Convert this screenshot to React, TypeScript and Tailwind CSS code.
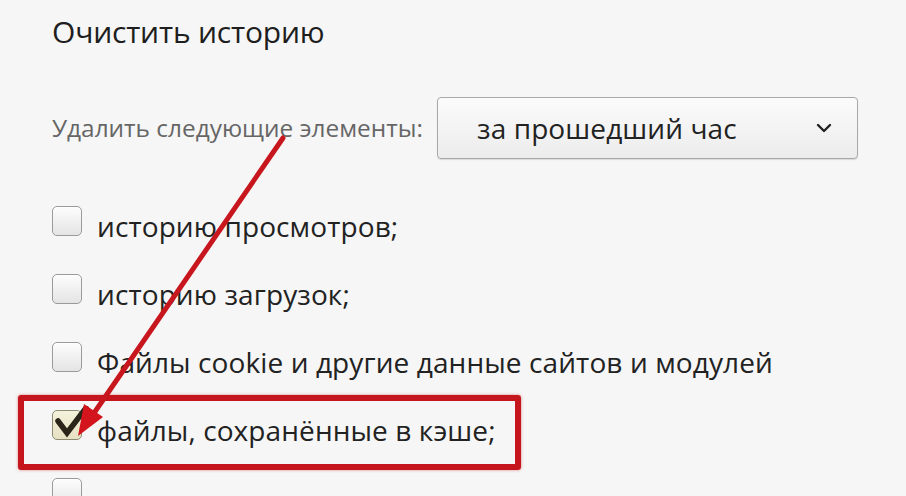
import React from "react";

const font = { fontFamily: '"Open Sans", "Noto Sans", sans-serif' };

function Box({ checked }: { checked?: boolean }) {
  return (
    <div className="relative shrink-0">
      <div
        className={
          checked
            ? "w-[30px] h-[30px] rounded-[5px] border border-[#8e8b74] bg-gradient-to-b from-[#f4f1dc] to-[#e6e1c2]"
            : "w-[30px] h-[30px] rounded-[5px] border border-[#9a9a9a] bg-gradient-to-b from-[#fdfdfd] to-[#e4e4e4] shadow-[inset_0_1px_1px_rgba(255,255,255,0.9)]"
        }
      />
      {checked && (
        <svg
          className="absolute left-[2px] top-[-4px]"
          width="36"
          height="32"
          viewBox="0 0 36 32"
        >
          <path
            d="M4 15 L13 27 L32 2"
            fill="none"
            stroke="#2b2418"
            strokeWidth="5.5"
            strokeLinecap="round"
            strokeLinejoin="miter"
          />
        </svg>
      )}
    </div>
  );
}

function Row({ label, checked }: { label: string; checked?: boolean }) {
  return (
    <div className="flex items-center h-[30px] gap-[15px]">
      <Box checked={checked} />
      <span className="pt-[10px] text-[28px] text-[#222] tracking-[0.1px] whitespace-nowrap leading-none">
        {label}
      </span>
    </div>
  );
}

export default function App() {
  return (
    <div
      className="relative w-[906px] h-[496px] overflow-hidden bg-[#f6f6f6]"
      style={font}
    >
      <div className="pl-[52px] pt-[12px]">
        <h1 className="text-[30px] font-normal text-[#1e1e1e] leading-[40px] tracking-[-0.2px]">
          Очистить историю
        </h1>
        <div className="flex items-center mt-[45px]">
          <span className="text-[24.4px] text-[#666] w-[385px] whitespace-nowrap">
            Удалить следующие элементы:
          </span>
          <div className="flex items-center justify-between w-[421px] h-[62px] pl-[39px] pr-[25px] border border-[#a8a8a8] rounded-[4px] bg-gradient-to-b from-[#fbfbfb] to-[#ececec] shadow-[0_1px_1px_rgba(0,0,0,0.12)]">
            <span className="text-[28px] text-[#222] tracking-[0.1px]">
              за прошедший час
            </span>
            <svg width="16" height="10" viewBox="0 0 16 10">
              <path
                d="M2 2 L8 8 L14 2"
                fill="none"
                stroke="#222"
                strokeWidth="2.4"
                strokeLinecap="round"
                strokeLinejoin="round"
              />
            </svg>
          </div>
        </div>
        <div className="flex flex-col gap-[38px] mt-[47px]">
          <Row label="историю просмотров;" />
          <Row label="историю загрузок;" />
          <Row label="Файлы cookie и другие данные сайтов и модулей" />
          <Row label="файлы, сохранённые в кэше;" checked />
          <Row label="" />
        </div>
      </div>

      <div className="absolute left-[18px] top-[395px] w-[503px] h-[75px] border-[6px] border-[#c4161c] rounded-[3px] shadow-[0_0_3px_rgba(196,22,28,0.5)] pointer-events-none" />

      <svg
        className="absolute left-0 top-0 pointer-events-none"
        width="906"
        height="496"
        viewBox="0 0 906 496"
      >
        <line
          x1="283"
          y1="138"
          x2="92"
          y2="416"
          stroke="#c8161e"
          strokeWidth="5"
          strokeLinecap="round"
        />
        <polygon points="78,436 84,404 103,417" fill="#d4141c" />
      </svg>
    </div>
  );
}
